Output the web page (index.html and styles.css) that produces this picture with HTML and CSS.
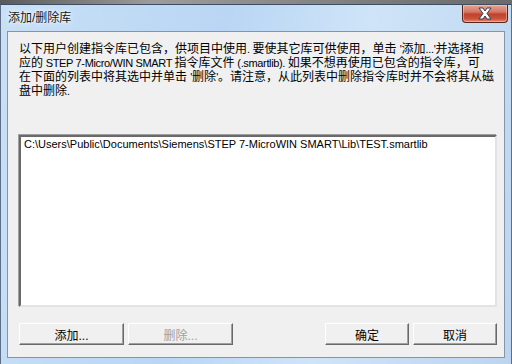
FILE: index.html
```html
<!DOCTYPE html>
<html lang="zh-CN">
<head>
    <meta charset="UTF-8">
    <meta name="viewport" content="width=device-width, initial-scale=1.0">
    <title>添加/删除库</title>
    <link rel="stylesheet" href="styles.css">
</head>
<body>
    <div class="desk-strip"></div>
    <div class="window">
        <div class="titlebar">
            <span class="title">添加/删除库</span>
            <button class="close-button" aria-label="关闭">
                <svg width="18" height="13" viewBox="0 0 18 13">
                    <path d="M3 1 L7 1 L9 4 L11 1 L15 1 L11 6.5 L15 12 L11 12 L9 9 L7 12 L3 12 L7 6.5 Z"
                          fill="#ffffff" stroke="#3a3f55" stroke-width="1" stroke-linejoin="round"/>
                </svg>
            </button>
        </div>

        <div class="client">
            <p class="intro">
                <span class="line">以下用户创建指令库已包含，供项目中使用<span class="latin">. </span>要使其它库可供使用，单击 <span class="latin">'</span>添加<span class="latin">...'</span>并选择相</span>
                <span class="line">应的<span class="latin"> STEP 7-Micro/WIN SMART </span>指令库文件<span class="latin"> (.smartlib). </span>如果不想再使用已包含的指令库，可</span>
                <span class="line">在下面的列表中将其选中并单击 <span class="latin">'</span>删除<span class="latin">'</span>。请注意，从此列表中删除指令库时并不会将其从磁</span>
                <span class="line">盘中删除<span class="latin">.</span></span>
            </p>

            <div class="lib-list">
                <div class="lib-item">C:\Users\Public\Documents\Siemens\STEP 7-MicroWIN SMART\Lib\TEST.smartlib</div>
            </div>

            <div class="button-row">
                <button class="dlg-button wide">添加...</button>
                <button class="dlg-button wide" disabled>删除...</button>
                <button class="dlg-button push-right">确定</button>
                <button class="dlg-button">取消</button>
            </div>
        </div>
    </div>
</body>
</html>
```

FILE: styles.css
```css
:root {
    --client-bg: #f0f0f0;
    --edge-dark: #3d4e63;
    --shadow-dark: #696969;
    --shadow-mid: #a0a0a0;
    --light-edge: #e3e3e3;
}

body {
    margin: 0;
    padding: 0;
    width: 512px;
    height: 364px;
    overflow: hidden;
    font-family: "Liberation Sans", "Noto Sans CJK SC", sans-serif;
    font-size: 12px;
    color: #000;
    background-color: #8a8a8a;
}

.desk-strip {
    height: 4px;
    background: linear-gradient(to right, #5a5a5a, #9c9c9c 30%, #7e7e7e 70%, #6a6a6a);
}

.window {
    display: flex;
    flex-direction: column;
    height: 360px;
    box-sizing: border-box;
    border-top: 1px solid var(--edge-dark);
    border-left: 1px solid #5d6f86;
    border-right: 1px solid #5d6f86;
    background: linear-gradient(100deg, #c9e0f6 0%, #b9d6f4 40%, #cfe4f8 65%, #bcd5ee 100%);
}

.titlebar {
    display: flex;
    align-items: flex-start;
    height: 26px;
    padding-left: 7px;
    padding-right: 3px;
}

.title {
    line-height: 26px;
    color: #101820;
    text-shadow: 0 0 6px #ffffff, 0 0 3px #ffffff;
}

.close-button {
    margin-left: auto;
    width: 46px;
    height: 18px;
    padding: 0;
    display: flex;
    align-items: center;
    justify-content: center;
    border: 1px solid #5b2320;
    border-top: none;
    border-radius: 0 0 4px 4px;
    background: linear-gradient(to bottom, #e8a394 0%, #d47865 40%, #c0412c 55%, #c9533d 80%, #e08a70 100%);
    box-shadow: inset 0 0 0 1px rgba(255, 220, 210, 0.45);
}

.client {
    flex: 1;
    display: flex;
    flex-direction: column;
    margin: 0 6px 6px 6px;
    padding: 10px 7px 0 11px;
    border: 1px solid #8595a8;
    background-color: var(--client-bg);
}

.intro {
    margin: 0;
    line-height: 14px;
}

.line {
    display: block;
    height: 14px;
    white-space: nowrap;
}

.latin {
    font-size: 11px;
    letter-spacing: -0.35px;
}

.lib-list {
    height: 166px;
    margin-top: 37px;
    padding: 1px 3px;
    background-color: #fff;
    border-top: 2px solid var(--shadow-dark);
    border-left: 2px solid var(--shadow-dark);
    border-right: 2px solid var(--light-edge);
    border-bottom: 2px solid var(--light-edge);
    box-shadow: -1px -1px 0 var(--shadow-mid);
}

.lib-item {
    font-size: 11px;
    line-height: 13px;
    white-space: nowrap;
}

.button-row {
    display: flex;
    gap: 4px;
    margin-top: 16px;
}

.dlg-button {
    width: 84px;
    height: 22px;
    padding: 0;
    font-family: inherit;
    font-size: 12px;
    color: #000;
    background-color: var(--client-bg);
    border-top: 1px solid #fff;
    border-left: 1px solid #fff;
    border-right: 1px solid var(--shadow-dark);
    border-bottom: 1px solid var(--shadow-dark);
    box-shadow: inset -1px -1px 0 var(--shadow-mid);
}

.dlg-button.wide {
    width: 105px;
}

.dlg-button:disabled {
    color: var(--shadow-mid);
}

.push-right {
    margin-left: auto;
}
```
